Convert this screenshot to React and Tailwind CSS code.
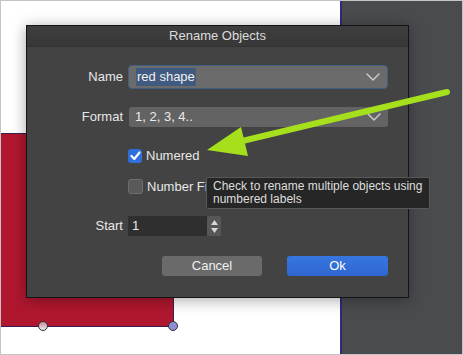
import React from 'react';

const Chevron = () => (
  <svg width="14" height="8" viewBox="0 0 14 8" className="shrink-0">
    <polyline points="1,1 7,7 13,1" fill="none" stroke="#c9c9c9" strokeWidth="1.5" strokeLinecap="round" strokeLinejoin="round" />
  </svg>
);

const Row = ({ label, className = '', children }) => (
  <div className={`flex items-center ${className}`}>
    <div className="w-[101px] pr-[5px] text-right text-[13px] text-[#e8e8e8]">{label}</div>
    {children}
  </div>
);

const App = () => {
  return (
    <div
      className="relative w-[463px] h-[355px] overflow-hidden border border-[#c4c4c4] bg-[#4a4b4f] flex"
      style={{ fontFamily: '"Liberation Sans", Arial, sans-serif' }}
    >
      {/* canvas */}
      <div className="relative w-[341px] h-full bg-white border-r-2 border-[#2e2a7a]">
        {/* red shape */}
        <div className="absolute left-0 top-[132px] w-[173px] h-[194px] bg-[#b0172f] border-t border-r border-b border-[#3a1d4f]" />
        <div className="absolute left-[37px] top-[320px] w-[10px] h-[10px] rounded-full border border-[#333] bg-gradient-to-b from-[#c98a9c] to-[#e8e8f0]" />
        <div className="absolute left-[167px] top-[320px] w-[10px] h-[10px] rounded-full border border-[#333] bg-[#8d8fd6]" />
      </div>

      {/* dialog */}
      <div className="absolute left-[25px] top-[24px] w-[383px] h-[273px] bg-[#434343] border border-[#141414] shadow-[0_2px_14px_rgba(0,0,0,0.35)] flex flex-col">
        <div className="h-[21px] shrink-0 bg-gradient-to-b from-[#3e3e3e] to-[#383838] border-b border-[#333] flex items-center justify-center text-[13px] text-[#dcdcdc]">
          Rename Objects
        </div>

        <Row label="Name" className="mt-[18px] h-[24px]">
          <div className="w-[260px] h-[24px] rounded-[4px] bg-[#6b6b6b] border border-[#3f5f86] flex items-center justify-between pl-[7px] pr-[7px]">
            <span className="bg-[#405b7f] text-[13px] text-[#f0f0f0] px-[1px] leading-[18px]">red shape</span>
            <Chevron />
          </div>
        </Row>

        <Row label="Format" className="mt-[18px] h-[20px]">
          <div className="w-[259px] h-[20px] rounded-[3px] bg-[#636363] flex items-center justify-between pl-[6px] pr-[7px] ml-[1px]">
            <span className="text-[13px] text-[#ececec]">1, 2, 3, 4..</span>
            <Chevron />
          </div>
        </Row>

        <div className="mt-[22px] h-[14px] ml-[101px] flex items-center gap-[4px]">
          <div className="w-[14px] h-[14px] rounded-[3px] bg-[#2f6fdc] flex items-center justify-center">
            <svg width="11" height="10" viewBox="0 0 11 10">
              <polyline points="1.5,5 4.3,8 9.5,1.5" fill="none" stroke="#fff" strokeWidth="2.2" strokeLinecap="round" strokeLinejoin="round" />
            </svg>
          </div>
          <span className="text-[13px] leading-[14px] text-[#e8e8e8]">Numered</span>
        </div>

        <div className="mt-[16px] h-[15px] ml-[101px] flex items-center gap-[4px]">
          <div className="w-[15px] h-[15px] rounded-[3px] bg-[#595959] border border-[#6e6e6e]" />
          <span className="text-[13px] leading-[15px] text-[#e8e8e8]">Number Fi</span>
        </div>

        <Row label="Start" className="mt-[22px] h-[20px]">
          <div className="w-[79px] h-[20px] bg-[#2f2f2f] flex items-center pl-[4px] text-[13px] text-[#ececec]">1</div>
          <div className="w-[14px] h-[20px] rounded-[2px] bg-[#575757] flex flex-col items-center justify-center gap-[3px]">
            <svg width="7" height="5" viewBox="0 0 7 5"><polygon points="3.5,0 7,5 0,5" fill="#d8d8d8" /></svg>
            <svg width="7" height="5" viewBox="0 0 7 5"><polygon points="0,0 7,0 3.5,5" fill="#d8d8d8" /></svg>
          </div>
        </Row>

        <div className="mt-[20px] h-[20px] flex justify-end gap-[25px] pr-[20px]">
          <button className="w-[100px] h-[20px] rounded-[3px] bg-[#6a6a6a] text-[13px] text-[#f0f0f0]">Cancel</button>
          <button className="w-[101px] h-[20px] rounded-[3px] bg-gradient-to-b from-[#3776e0] to-[#2f66d0] text-[13px] text-white">Ok</button>
        </div>
      </div>

      {/* tooltip */}
      <div className="absolute left-[205px] top-[176px] w-[224px] h-[32px] bg-[#262626] border border-[#585858] rounded-[2px] px-[6px] pt-[2px] text-[12px] leading-[13px] text-[#dedede]">
        Check to rename multiple objects using
        <br />
        numbered labels
      </div>

      {/* green arrow */}
      <svg className="absolute left-0 top-0 pointer-events-none" width="463" height="355" viewBox="0 0 463 355">
        <line x1="446" y1="91" x2="237" y2="141" stroke="#a6e01c" strokeWidth="6" strokeLinecap="round" />
        <polygon points="206,149 240,126 247,155" fill="#a6e01c" />
      </svg>
    </div>
  );
};

export default App;
